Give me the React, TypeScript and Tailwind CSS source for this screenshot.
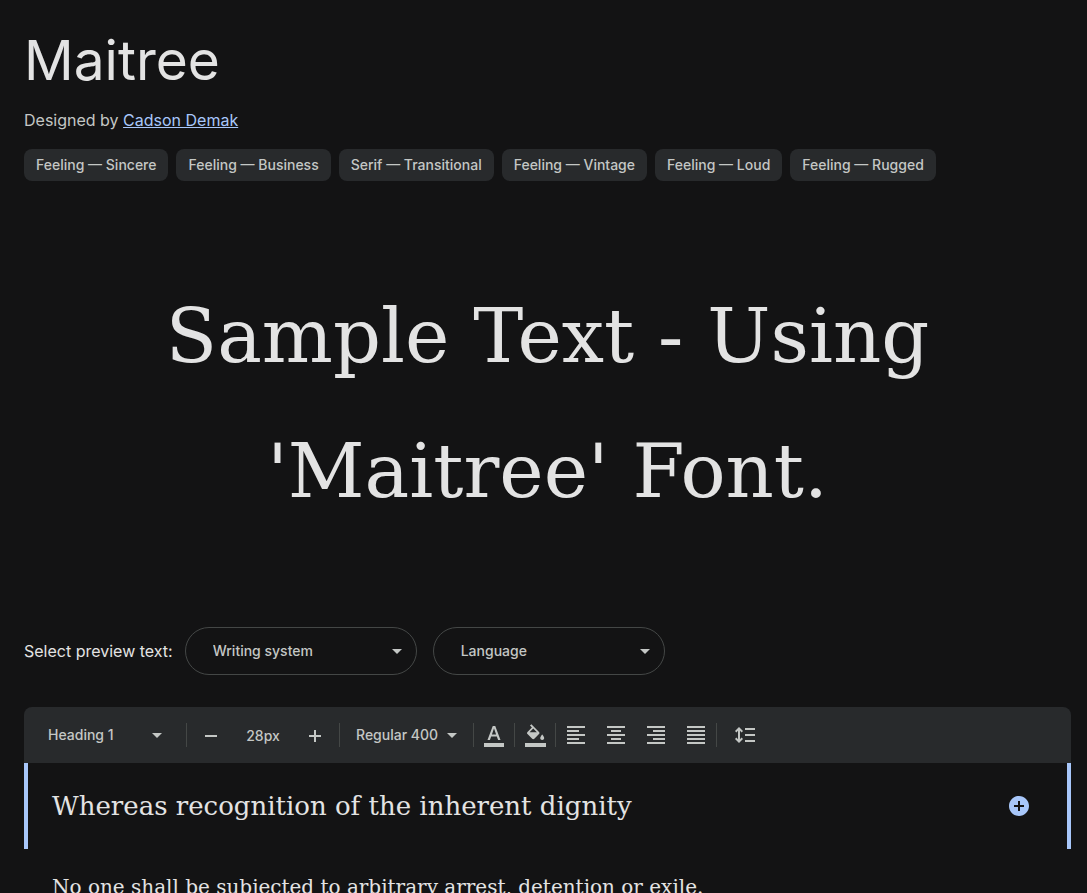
import type { ReactNode } from 'react';
import {
  MdAddCircle,
  MdArrowDropDown,
  MdFormatAlignCenter,
  MdFormatAlignJustify,
  MdFormatAlignLeft,
  MdFormatAlignRight,
  MdFormatColorText,
} from 'react-icons/md';

const tags = [
  'Feeling — Sincere',
  'Feeling — Business',
  'Serif — Transitional',
  'Feeling — Vintage',
  'Feeling — Loud',
  'Feeling — Rugged',
];

const alignments = [
  { label: 'Align left', icon: MdFormatAlignLeft },
  { label: 'Align center', icon: MdFormatAlignCenter },
  { label: 'Align right', icon: MdFormatAlignRight },
  { label: 'Justify', icon: MdFormatAlignJustify },
];

function ColorFillIcon() {
  return (
    <svg viewBox="0 0 24 24" className="size-6" fill="currentColor" aria-hidden="true">
      <path d="M16 8.94L8.4 1.2 7 2.6l1.9 1.9-4.4 4.44c-.59.59-.59 1.54 0 2.12l4.7 4.8c.29.29.68.44 1.06.44s.77-.15 1.06-.44l4.68-4.8c.59-.58.59-1.53 0-2.12zM6.6 9.2L10.26 5.6 13.9 9.2H6.6zM19.2 11.5s-2 2.17-2 3.5c0 1.1.9 2 2 2s2-.9 2-2c0-1.33-2-3.5-2-3.5zM2 20h21v4H2v-4z" />
    </svg>
  );
}

function LineSpacingIcon() {
  return (
    <svg viewBox="0 -960 960 960" className="size-6" fill="currentColor" aria-hidden="true">
      <path d="M240-160 80-320l56-56 64 62v-332l-64 62-56-56 160-160 160 160-56 56-64-62v332l64-62 56 56-160 160Zm240-40v-80h400v80H480Zm0-240v-80h400v80H480Zm0-240v-80h400v80H480Z" />
    </svg>
  );
}

function StepIcon({ plus = false }: { plus?: boolean }) {
  return (
    <svg viewBox="0 0 20 20" className="size-5" stroke="currentColor" strokeWidth="2" aria-hidden="true">
      <path d={plus ? 'M4 11h12M10 5v12' : 'M4 11h12'} />
    </svg>
  );
}

function Divider() {
  return <span className="h-6 w-px shrink-0 bg-[#444746]" />;
}

function IconButton({ label, children }: { label: string; children: ReactNode }) {
  return (
    <button type="button" aria-label={label} className="flex size-10 shrink-0 items-center justify-center">
      {children}
    </button>
  );
}

function PillSelect({ label }: { label: string }) {
  return (
    <div className="relative w-[232px]">
      <select
        aria-label={label}
        className="h-12 w-full appearance-none rounded-full border border-[#444746] bg-transparent pr-10 pl-[27px] text-sm font-medium text-[#c4c7c5]"
      >
        <option>{label}</option>
      </select>
      <MdArrowDropDown className="pointer-events-none absolute top-3 right-2 size-6 text-[#c4c7c5]" />
    </div>
  );
}

function ToolbarSelect({ label, value, className }: { label: string; value: string; className: string }) {
  return (
    <div className={`relative shrink-0 ${className}`}>
      <select aria-label={label} className="h-10 w-full appearance-none bg-transparent pr-6">
        <option>{value}</option>
      </select>
      <MdArrowDropDown className="pointer-events-none absolute top-2 right-0 size-6" />
    </div>
  );
}

export default function App() {
  return (
    <main className="min-h-screen bg-[#131314] pr-4 pl-6 font-['Inter',sans-serif] text-[#e3e3e3]">
      <header className="pt-7">
        <h1 className="text-[55px] leading-16">Maitree</h1>
        <p className="mt-4 text-base leading-6 text-[#c4c7c5]">
          Designed by{' '}
          <a href="#designer" className="text-[#a8c7fa] underline">
            Cadson Demak
          </a>
        </p>
        <ul className="mt-[17px] flex flex-wrap gap-2">
          {tags.map((tag) => (
            <li
              key={tag}
              className="flex h-8 items-center rounded-lg bg-[#282a2c] px-3 text-sm font-medium text-[#c4c7c5]"
            >
              {tag}
            </li>
          ))}
        </ul>
      </header>

      <p className="mx-auto mt-22 max-w-[900px] text-center font-['DejaVu_Serif',serif] text-[75px] leading-[135px]">
        Sample Text - Using 'Maitree' Font.
      </p>

      <div className="mt-22 flex items-center gap-3">
        <span className="text-base">Select preview text:</span>
        <div className="flex gap-4">
          <PillSelect label="Writing system" />
          <PillSelect label="Language" />
        </div>
      </div>

      <section className="mt-8">
        <div className="flex h-14 items-center rounded-t-lg bg-[#282a2c] pl-6 text-sm font-medium text-[#c4c7c5]">
          <ToolbarSelect label="Text style" value="Heading 1" className="w-[121px]" />
          <span className="w-[17px]" />
          <Divider />
          <div className="flex items-center px-1">
            <IconButton label="Decrease size">
              <StepIcon />
            </IconButton>
            <input
              aria-label="Font size"
              defaultValue="28px"
              className="h-10 w-16 bg-transparent text-center"
            />
            <IconButton label="Increase size">
              <StepIcon plus />
            </IconButton>
          </div>
          <Divider />
          <ToolbarSelect label="Font weight" value="Regular 400" className="ml-4 w-[108px]" />
          <span className="w-[9px]" />
          <Divider />
          <IconButton label="Text color">
            <MdFormatColorText className="size-6" />
          </IconButton>
          <Divider />
          <IconButton label="Background color">
            <ColorFillIcon />
          </IconButton>
          <Divider />
          {alignments.map(({ label, icon: Icon }) => (
            <IconButton key={label} label={label}>
              <Icon className="size-6" />
            </IconButton>
          ))}
          <Divider />
          <div className="pl-2">
            <IconButton label="Line spacing">
              <LineSpacingIcon />
            </IconButton>
          </div>
        </div>

        <div className="flex h-[86px] items-center justify-between border-x-4 border-[#a8c7fa] pr-9 pl-6">
          <h2 className="font-['DejaVu_Serif',serif] text-[26px]">
            Whereas recognition of the inherent dignity
          </h2>
          <button type="button" aria-label="Add text block">
            <MdAddCircle className="size-6 text-[#a8c7fa]" />
          </button>
        </div>
        <p className="px-7 pt-6 font-['DejaVu_Serif',serif] text-[20px] leading-7">
          No one shall be subjected to arbitrary arrest, detention or exile.
        </p>
      </section>
    </main>
  );
}
